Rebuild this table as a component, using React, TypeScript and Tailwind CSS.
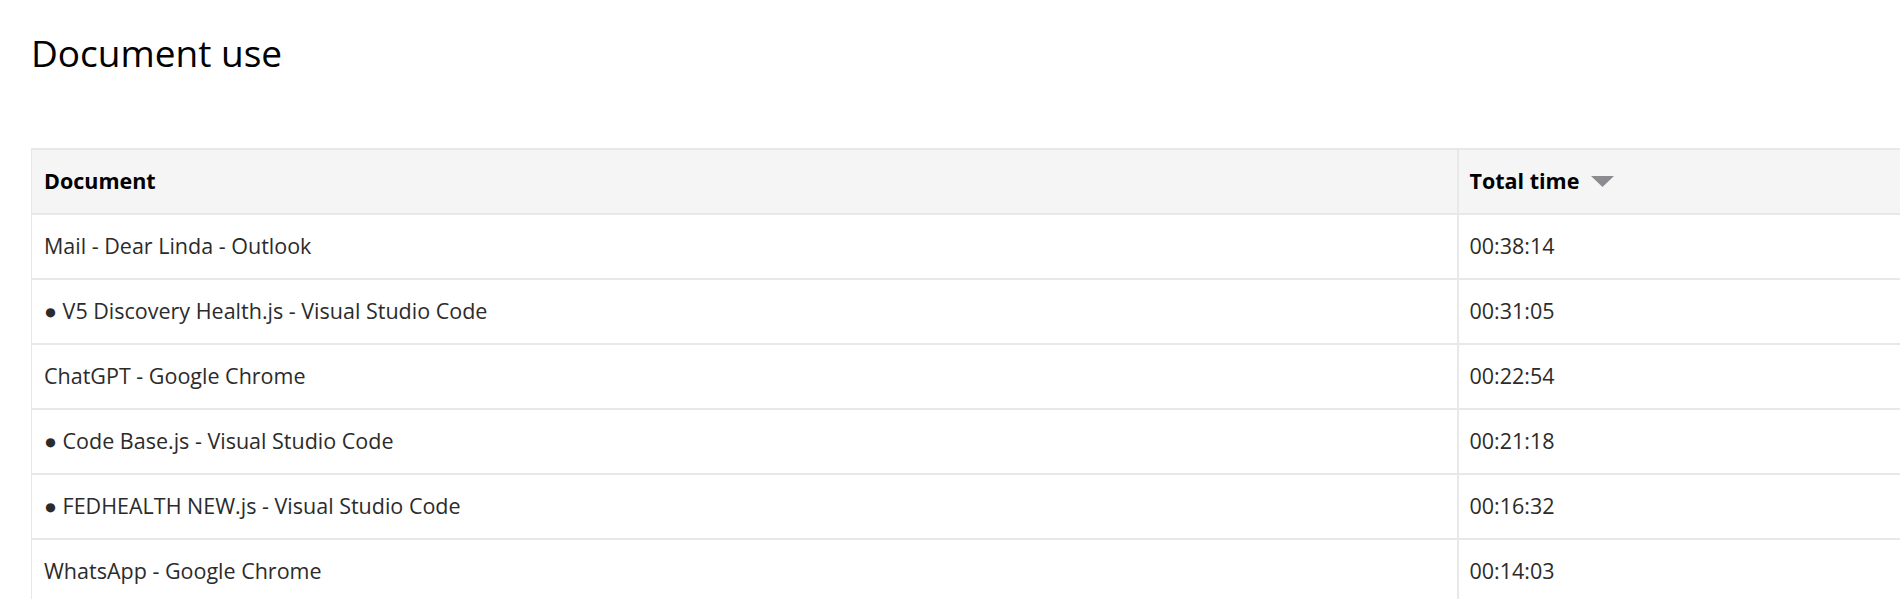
const rows = [
  { doc: "Mail - Dear Linda - Outlook", time: "00:38:14" },
  { doc: "● V5 Discovery Health.js - Visual Studio Code", time: "00:31:05" },
  { doc: "ChatGPT - Google Chrome", time: "00:22:54" },
  { doc: "● Code Base.js - Visual Studio Code", time: "00:21:18" },
  { doc: "● FEDHEALTH NEW.js - Visual Studio Code", time: "00:16:32" },
  { doc: "WhatsApp - Google Chrome", time: "00:14:03" },
];

const App = () => {
  return (
    <div className="h-[599px] w-[1900px] overflow-hidden bg-white font-['Open_Sans',sans-serif]">
      <div className="pl-[31px] pt-[28px]">
        <h1 className="text-[37px] leading-[50px] text-black">Document use</h1>
        <table className="mt-[70px] w-[2000px] border-collapse text-[21.5px]">
          <thead>
            <tr className="h-[65px] bg-[#f5f5f5]">
              <th className="border-2 border-l border-[#e8e8e8] pl-[12px] text-left font-bold text-black w-[1426px]">
                Document
              </th>
              <th className="border-2 border-[#e8e8e8] pl-[11px] text-left font-bold text-black">
                <span className="flex items-center gap-3">
                  Total time
                  <svg width="23" height="11" viewBox="0 0 23 11">
                    <path d="M0 0 H23 L11.5 11 Z" fill="#8c8c90" />
                  </svg>
                </span>
              </th>
            </tr>
          </thead>
          <tbody>
            {rows.map((r) => (
              <tr key={r.doc} className="h-[65px]">
                <td className="border-2 border-l border-[#e8e8e8] pl-[12px] text-[#2b2b2b]">{r.doc}</td>
                <td className="border-2 border-[#e8e8e8] pl-[11px] text-[#2b2b2b]">{r.time}</td>
              </tr>
            ))}
          </tbody>
        </table>
      </div>
    </div>
  );
};

export default App;
